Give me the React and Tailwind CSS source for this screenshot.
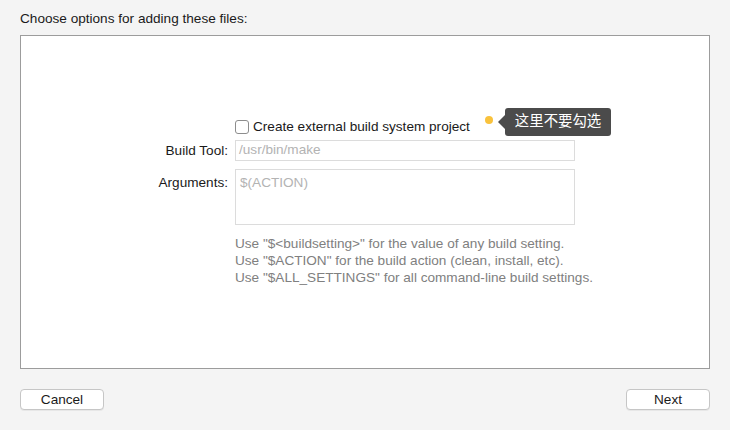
export default function App() {
  return (
    <div
      className="w-[730px] h-[430px] bg-[#f4f4f4] text-[13.6px] text-[#1a1a1a] flex flex-col px-5"
      style={{ fontFamily: '"Liberation Sans", Arial, "Noto Sans CJK SC", sans-serif' }}
    >
      <div className="h-[35px] pt-[11px] leading-[16px]">Choose options for adding these files:</div>

      {/* Options panel */}
      <div className="h-[334px] bg-white border border-[#9c9c9c] flex flex-col pt-[81px]">
        <div className="flex">
          <div className="w-[214px] shrink-0" />
          <div className="flex items-center h-[20px] gap-[4px]">
            <span className="w-[14px] h-[14px] border border-[#8d8d8d] rounded-[3px] bg-white" />
            <span className="leading-[16px]">Create external build system project</span>
            <span className="ml-[11px] w-[8px] h-[8px] rounded-full bg-[#f9c23c] -mt-[15px]" />
            <div className="relative ml-[8px] -mt-[11px]">
              <span className="absolute left-[-7px] top-[7px] w-0 h-0 border-y-[7px] border-y-transparent border-r-[7px] border-r-[#4b4b4b]" />
              <div className="bg-[#4b4b4b] text-white text-[14.4px] rounded-[3px] h-[28px] px-[10px] flex items-center">
                这里不要勾选
              </div>
            </div>
          </div>
        </div>

        <div className="flex mt-[3px] items-center">
          <div className="w-[207px] shrink-0 text-right leading-[16px]">Build Tool:</div>
          <div className="ml-[7px] w-[340px] h-[21px] border border-[#dcdcdc] px-[3px] flex items-center text-[#b3b3b3]">
            /usr/bin/make
          </div>
        </div>

        <div className="flex mt-[8px] items-start">
          <div className="w-[207px] shrink-0 text-right leading-[16px] pt-[6px]">Arguments:</div>
          <div className="ml-[7px] w-[340px] h-[56px] border border-[#dcdcdc] px-[4px] pt-[5px] leading-[16px] text-[#b3b3b3]">
            $(ACTION)
          </div>
        </div>

        <div className="ml-[214px] mt-[10px] text-[#808080] leading-[17px]">
          <div>Use "$&lt;buildsetting&gt;" for the value of any build setting.</div>
          <div>Use "$ACTION" for the build action (clean, install, etc).</div>
          <div>Use "$ALL_SETTINGS" for all command-line build settings.</div>
        </div>
      </div>

      {/* Buttons */}
      <div className="flex justify-between mt-[20px]">
        <button className="w-[84px] h-[21px] bg-white border border-[#c6c6c6] rounded-[4px] text-[13.6px] leading-none shadow-[0_1px_0_rgba(0,0,0,0.05)]">
          Cancel
        </button>
        <button className="w-[84px] h-[21px] bg-white border border-[#c6c6c6] rounded-[4px] text-[13.6px] leading-none shadow-[0_1px_0_rgba(0,0,0,0.05)]">
          Next
        </button>
      </div>
    </div>
  )
}
